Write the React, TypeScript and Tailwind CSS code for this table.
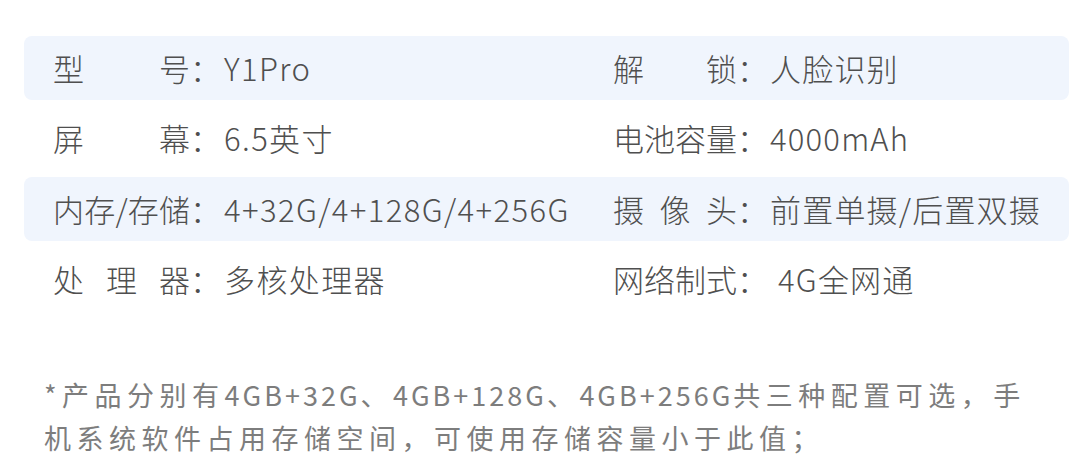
import React from "react";

type Spec = { label: string; value: string };

const rows: { left: Spec; right: Spec; shaded: boolean }[] = [
    { left: { label: "型号", value: "Y1Pro" }, right: { label: "解锁", value: "人脸识别" }, shaded: true },
    { left: { label: "屏幕", value: "6.5英寸" }, right: { label: "电池容量", value: "4000mAh" }, shaded: false },
    { left: { label: "内存/存储", value: "4+32G/4+128G/4+256G" }, right: { label: "摄像头", value: "前置单摄/后置双摄" }, shaded: true },
    { left: { label: "处理器", value: "多核处理器" }, right: { label: "网络制式", value: "\u00a04G全网通" }, shaded: false },
];

function Label({ text, width }: { text: string; width: string }) {
    // spread short labels across the same width as the longest one
    const spaced = text.length <= 3 && !text.includes("/") ? text.split("").join(" ") : text;
    return (
        <span className={`inline-block ${width} text-justify [text-align-last:justify] whitespace-normal`}>
            {spaced}
        </span>
    );
}

// latin runs in the footnote are set tighter than the han characters
function Latin({ children }: { children: React.ReactNode }) {
    return <span className="tracking-[3px]">{children}</span>;
}

export default function App() {
    return (
        <div
            className="w-[1080px] h-[459px] bg-white overflow-hidden"
            style={{ fontFamily: '"Noto Sans CJK SC", "Noto Sans", sans-serif' }}
        >
            <div className="pt-[36px] pl-[24px] w-[1069px] flex flex-col gap-[6.5px]">
                {rows.map((r, i) => (
                    <div
                        key={i}
                        className={`h-16 rounded-lg flex items-center pl-[29px] text-[31px] font-light text-[#4f4f4f] whitespace-nowrap ${r.shaded ? "bg-[#f0f5fd]" : ""}`}
                    >
                        <div className="w-[560px] flex items-center">
                            <Label text={r.left.label} width="w-[137px]" />
                            <span>：</span>
                            <span className="ml-[3px] tracking-[1.4px]">{r.left.value}</span>
                        </div>
                        <div className="flex items-center">
                            <Label text={r.right.label} width="w-[124px]" />
                            <span>：</span>
                            <span className="ml-[2px] tracking-[1.2px]">{r.right.value}</span>
                        </div>
                    </div>
                ))}
            </div>

            <p className="mt-[61px] pl-[44px] text-[27px] leading-[43px] tracking-[5.5px] text-[#7d7d7d] whitespace-nowrap">
                *产品分别有<Latin>4GB+32G</Latin>、<Latin>4GB+128G</Latin>、<Latin>4GB+256G</Latin>共三种配置可选，手
                <br />
                机系统软件占用存储空间，可使用存储容量小于此值；
            </p>
        </div>
    );
}
